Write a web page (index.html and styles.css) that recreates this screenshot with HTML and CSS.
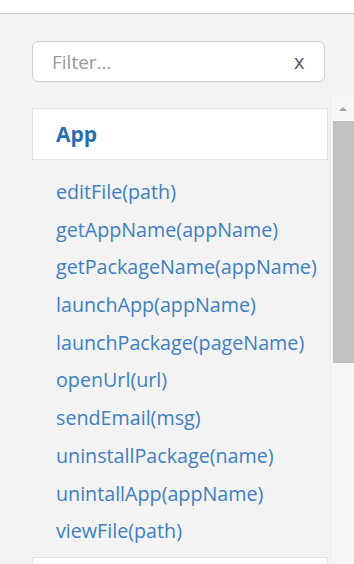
FILE: index.html
```html
<html>
<head>
    <title>API Reference</title>
    <link rel="stylesheet" href="styles.css">
</head>
<body>
<div class="topBar"></div>

<div class="filterDiv">
    <div class="filterBox">
        <input type="text" id="filter" placeholder="Filter..."/>
        <span class="clearX">x</span>
    </div>
</div>

<div class="mainRow">
    <div class="listPane">
        <div class="groupHead">App</div>
        <ul class="methods">
            <li><a href="#">editFile(path)</a></li>
            <li><a href="#">getAppName(appName)</a></li>
            <li><a href="#">getPackageName(appName)</a></li>
            <li><a href="#">launchApp(appName)</a></li>
            <li><a href="#">launchPackage(pageName)</a></li>
            <li><a href="#">openUrl(url)</a></li>
            <li><a href="#">sendEmail(msg)</a></li>
            <li><a href="#">uninstallPackage(name)</a></li>
            <li><a href="#">unintallApp(appName)</a></li>
            <li><a href="#">viewFile(path)</a></li>
        </ul>
        <div class="groupHead"></div>
    </div>
    <div class="scrollBar">
        <div class="upArrow"></div>
        <div class="thumb"></div>
    </div>
</div>
</body>
</html>
```

FILE: styles.css
```css
body{
    margin: 0;
    background-color: #f3f3f3;
    font-family: "Open Sans", Lato, sans-serif;
    height: 564px;
    overflow: hidden;
}

.topBar{
    height: 13px;
    background-color: #ffffff;
    border-bottom: 1px solid #c6c6c6;
}

.filterDiv{
    padding: 27px 29px 15px 32px;
}

.filterBox{
    height: 39px;
    background-color: #fff;
    border: 1px solid #cfcfcf;
    border-radius: 6px;
    display: flex;
    align-items: center;
    padding: 0 20px 0 19px;
}

#filter{
    flex: 1;
    border: none;
    outline: none;
    font-family: inherit;
    font-size: 19px;
    color: #333;
    padding: 0;
    background: transparent;
}

#filter::placeholder{
    color: #9a9a9a;
}

.clearX{
    font-size: 20px;
    color: #555;
    margin-right: 2px;
}

.mainRow{
    display: flex;
    height: 467px;
}

.listPane{
    flex: 1;
    padding: 11px 2px 0 32px;
    overflow: hidden;
}

.groupHead{
    height: 50px;
    line-height: 50px;
    background-color: #fff;
    border: 1px solid #e3e3e3;
    padding-left: 23px;
    font-size: 21px;
    font-weight: bold;
    color: #2b6db2;
}

.methods{
    list-style-type: none;
    margin: 0;
    padding: 13px 0 7px 24px;
}

.methods li{
    height: 37.7px;
    line-height: 37.7px;
    font-size: 19.7px;
    white-space: nowrap;
}

.methods a{
    color: #3d7fc1;
    text-decoration: none;
}

.scrollBar{
    width: 23px;
    background-color: #f6f6f6;
    border-left: 1px solid #ececec;
}

.upArrow{
    height: 24px;
    display: flex;
    justify-content: center;
    padding-top: 10px;
    box-sizing: border-box;
}

.upArrow::before{
    content: "";
    border-left: 4px solid transparent;
    border-right: 4px solid transparent;
    border-bottom: 4px solid #a3a3a3;
    width: 0;
    height: 0;
}

.thumb{
    height: 242px;
    margin-left: 2px;
    background-color: #c1c1c1;
}
```
